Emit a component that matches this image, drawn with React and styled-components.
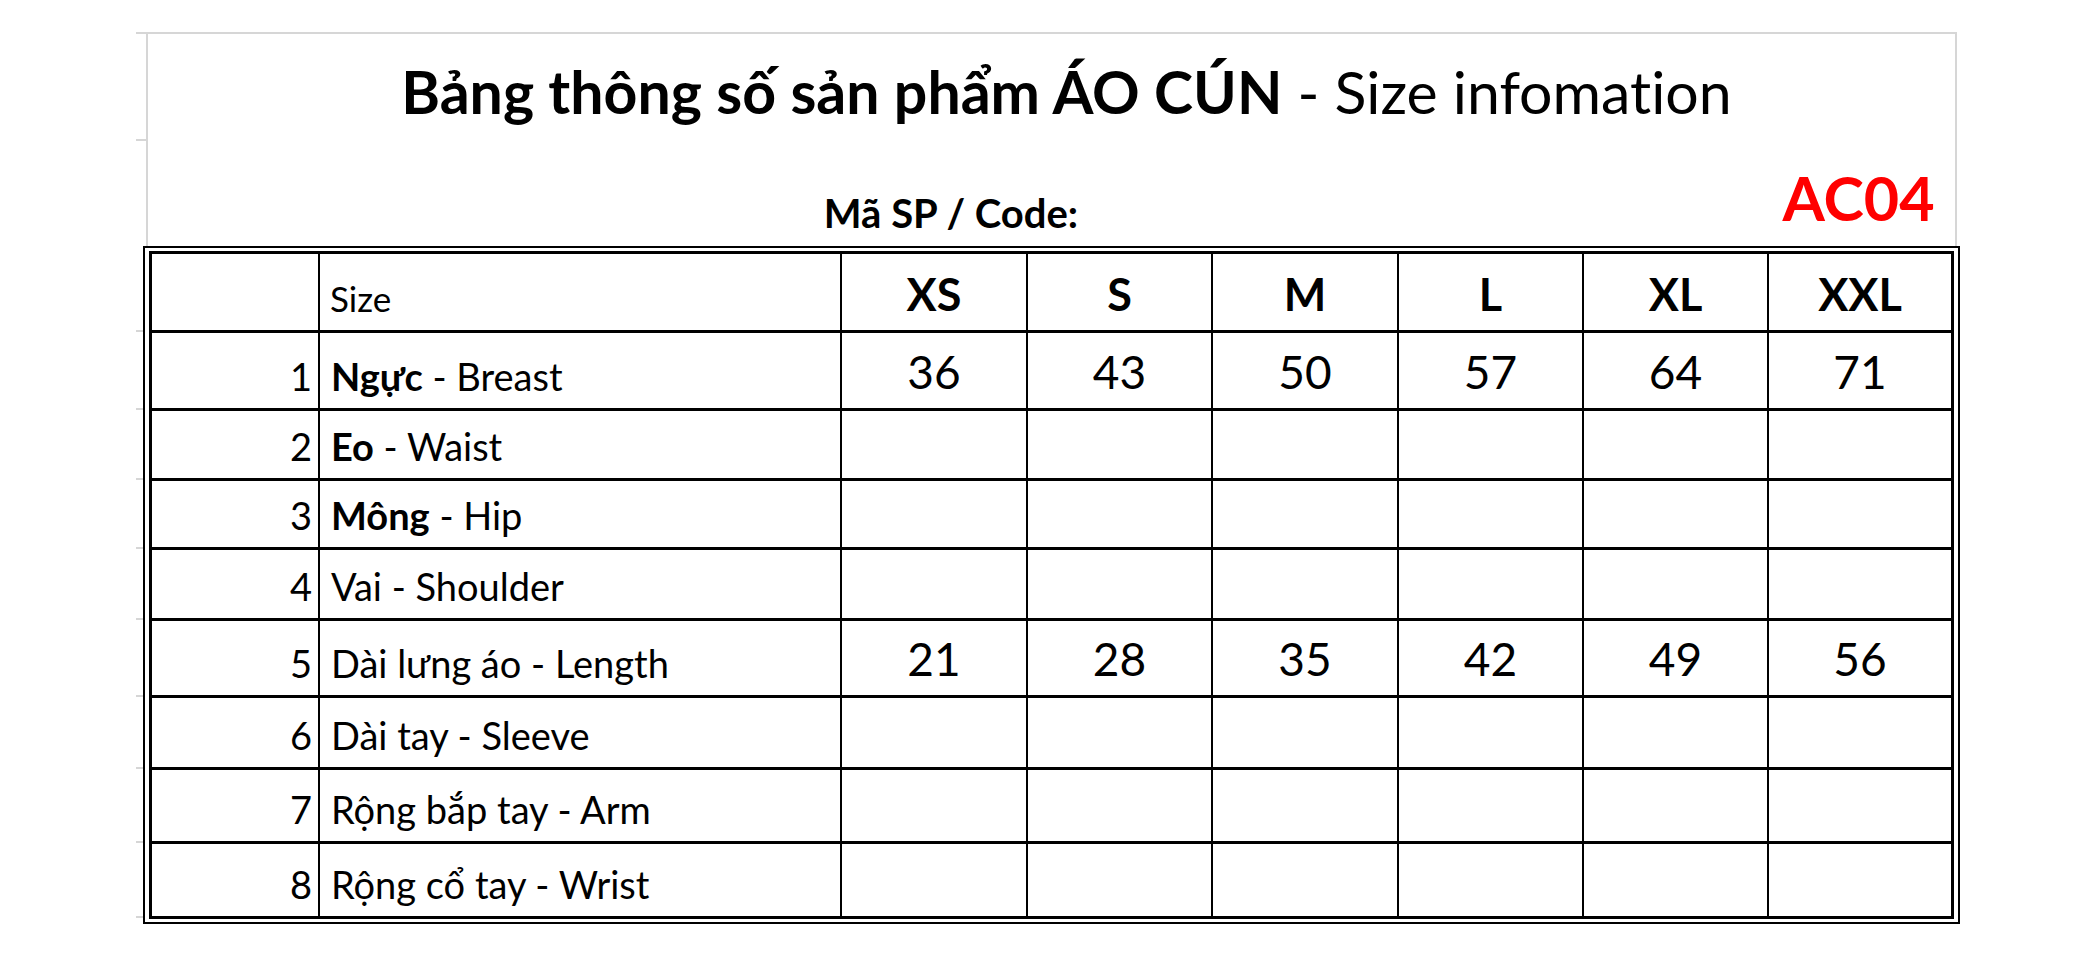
import React from "react";
import styled, { createGlobalStyle } from "styled-components";

const GlobalStyle = createGlobalStyle`
  html, body {
    margin: 0;
    padding: 0;
    background: #fff;
  }
  body {
    font-family: Lato, "Noto Sans", sans-serif;
    font-variant-ligatures: none;
    color: #000;
  }
`;

const GRID = "#d6d6d6";
const COLS = "166px 520px 184px 183px 184px 183px 183px 182px";

const sizes = ["XS", "S", "M", "L", "XL", "XXL"];

const rows = [
  { no: 1, bold: "Ngực", text: "Breast", values: [36, 43, 50, 57, 64, 71], height: 75 },
  { no: 2, bold: "Eo", text: "Waist", height: 67 },
  { no: 3, bold: "Mông", text: "Hip", height: 66 },
  { no: 4, text: "Vai - Shoulder", height: 68 },
  { no: 5, text: "Dài lưng áo - Length", values: [21, 28, 35, 42, 49, 56], height: 74 },
  { no: 6, text: "Dài tay - Sleeve", height: 69 },
  { no: 7, text: "Rộng bắp tay - Arm", height: 71 },
  { no: 8, text: "Rộng cổ tay - Wrist", height: 72 },
];

const App = () => {
  return (
    <Page>
      <GlobalStyle />
      <Sheet>
        <Header>
          <TitleRow>
            <Title>
              <b>Bảng thông số sản phẩm ÁO CÚN</b> - Size infomation
            </Title>
          </TitleRow>
          <CodeRow>
            <span />
            <CodeLabel>Mã SP / Code:</CodeLabel>
            <span />
            <CodeValue>AC04</CodeValue>
          </CodeRow>
        </Header>

        <Frame>
          <Table>
            <Row $height={76}>
              <Cell />
              <Cell $pad="10px">
                <SizeText>Size</SizeText>
              </Cell>
              {sizes.map((s) => (
                <Cell key={s} $align="center">
                  <SizeHead>{s}</SizeHead>
                </Cell>
              ))}
            </Row>

            {rows.map((r) => (
              <Row key={r.no} $height={r.height}>
                <Cell $align="flex-end" $padRight="6px">
                  <Label>{r.no}</Label>
                </Cell>
                <Cell $pad="11px">
                  <Label>
                    {r.bold ? (
                      <>
                        <b>{r.bold}</b> - {r.text}
                      </>
                    ) : (
                      r.text
                    )}
                  </Label>
                </Cell>
                {sizes.map((s, i) => (
                  <Cell key={s} $align="center">
                    <Value>{r.values ? r.values[i] : ""}</Value>
                  </Cell>
                ))}
              </Row>
            ))}
          </Table>
        </Frame>
      </Sheet>
    </Page>
  );
};

const Page = styled.div`
  padding: 32px 0 40px 143px;
  background: #fff;
`;

const Sheet = styled.div`
  width: 1817px;
`;

const Header = styled.div`
  position: relative;
  margin-left: 3px;
  width: 1811px;
  box-sizing: border-box;
  border: 2px solid ${GRID};
  border-bottom: none;

  &::before {
    content: "";
    position: absolute;
    top: -2px;
    left: -12px;
    width: 10px;
    height: 2px;
    background: ${GRID};
  }
`;

const TitleRow = styled.div`
  position: relative;
  height: 106px;
  display: flex;
  align-items: flex-end;
  justify-content: center;
  padding: 0 0 19px 30px;
  box-sizing: border-box;

  &::after {
    content: "";
    position: absolute;
    bottom: -1px;
    left: -12px;
    width: 12px;
    height: 2px;
    background: ${GRID};
  }
`;

const Title = styled.div`
  font-size: 59px;
  line-height: 1;
  font-weight: 400;
  white-space: nowrap;

  b {
    font-weight: 700;
  }
`;

const CodeRow = styled.div`
  height: 106px;
  display: grid;
  grid-template-columns: 171px 1264px 185px 187px;
  align-items: end;
`;

const CodeLabel = styled.div`
  font-size: 40px;
  font-weight: 700;
  line-height: 1;
  text-align: center;
  padding-bottom: 13px;
`;

const CodeValue = styled.div`
  font-size: 61px;
  font-weight: 700;
  color: #ff0000;
  line-height: 1;
  text-align: center;
  padding: 0 6px 18px 0;
`;

const Frame = styled.div`
  border: 2px solid #000;
  padding: 3px 4px;
  background: #fff;
`;

const Table = styled.div`
  display: flex;
  flex-direction: column;
  row-gap: 3px;
  border: 3px solid #000;
  background: #000;
`;

const Row = styled.div`
  position: relative;
  display: grid;
  grid-template-columns: ${COLS};
  column-gap: 2px;
  height: ${(p) => p.$height}px;

  &::after {
    content: "";
    position: absolute;
    left: -16px;
    bottom: -2px;
    width: 7px;
    height: 2px;
    background: ${GRID};
  }
`;

const Cell = styled.div`
  background: #fff;
  display: flex;
  align-items: flex-end;
  justify-content: ${(p) => p.$align || "flex-start"};
  padding: 0 ${(p) => p.$padRight || "0"} 13px ${(p) => p.$pad || "0"};
  overflow: hidden;
`;

const Label = styled.span`
  font-size: 38px;
  line-height: 1;
  white-space: nowrap;

  b {
    font-weight: 700;
  }
`;

const SizeText = styled.span`
  font-size: 35px;
  line-height: 1;
  padding-bottom: 1px;
`;

const SizeHead = styled.span`
  font-size: 45px;
  font-weight: 700;
  line-height: 1;
`;

const Value = styled.span`
  font-size: 46px;
  line-height: 1;
`;

export default App;
